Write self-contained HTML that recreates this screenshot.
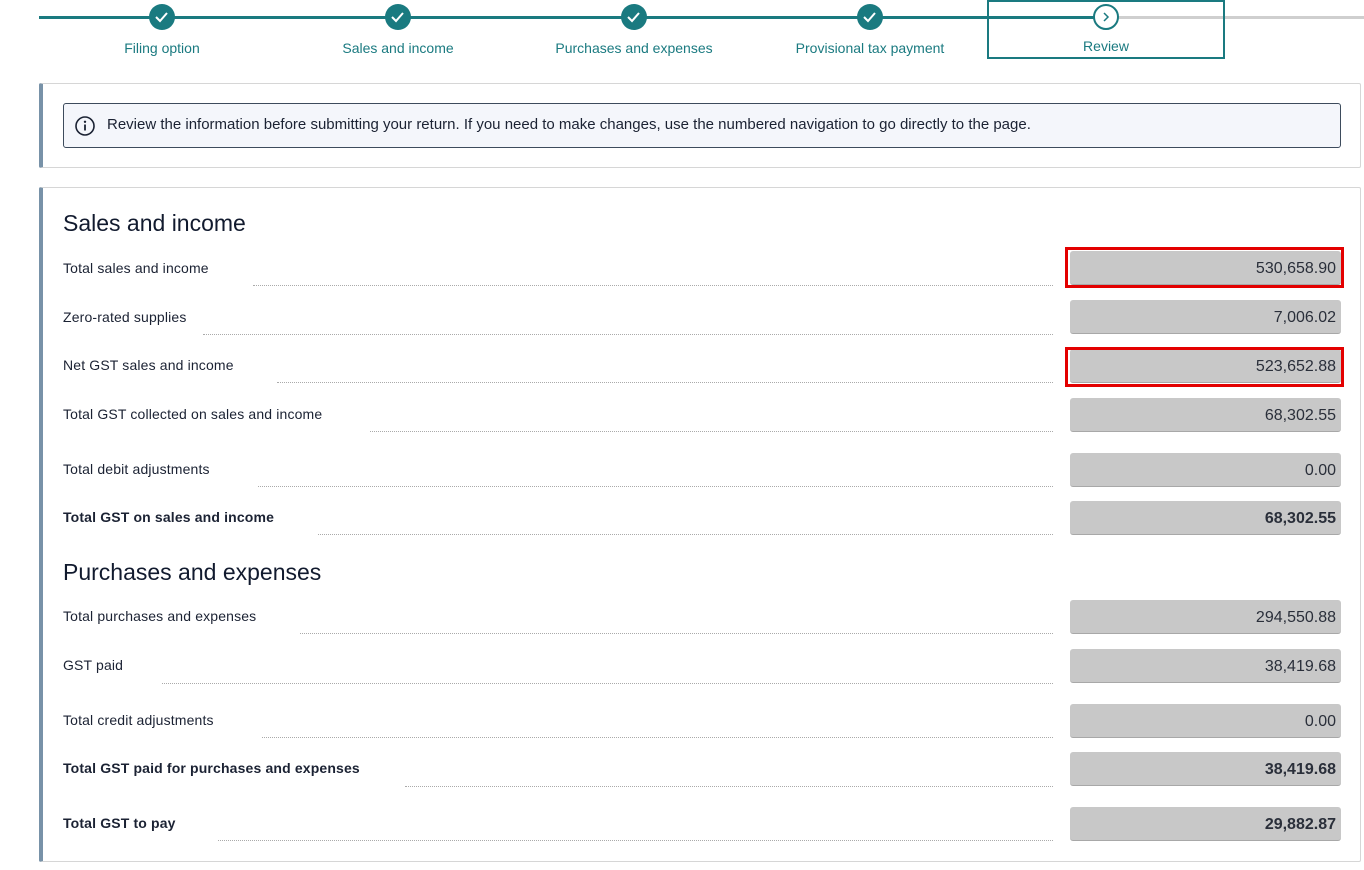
<!DOCTYPE html>
<html><head><style>
*{margin:0;padding:0;box-sizing:border-box}
body{width:1364px;height:870px;background:#fff;position:relative;overflow:hidden;font-family:"Liberation Sans",sans-serif;color:#1b2233}
.a{position:absolute}
.lbl{position:absolute;color:#1a7a80;font-size:14px;white-space:nowrap;transform:translateX(-50%)}
.rl{position:absolute;left:63px;font-size:14px;color:#1b2233;white-space:nowrap;letter-spacing:0.15px}
.b{font-weight:bold}
.dot{position:absolute;height:0;border-top:1px dotted #aaa;right:311px}
.f{position:absolute;left:1070px;width:271px;height:34px;background:#c8c8c8;border-radius:3px;border-bottom:1px solid #a8a8a8;text-align:right;padding-right:5px;font-size:16px;line-height:36px;color:#2a2f3a}
.red{position:absolute;left:1065px;width:279px;border:3px solid #e30000}
h2{position:absolute;left:63px;font-size:23px;font-weight:normal;color:#111a2e}
</style></head><body>
<div class="a" style="left:39px;top:16px;width:1087px;height:3px;background:#1a7a80"></div>
<div class="a" style="left:1118px;top:16px;width:246px;height:3px;background:#cfcfcf"></div>
<div class="a" style="left:987px;top:0;width:238px;height:59px;border:2px solid #1a7a80;background:transparent"></div>
<svg class="a" style="left:0;top:0" width="1364" height="40">
<g fill="#1a7a80">
<circle cx="162" cy="17" r="13"/><circle cx="398" cy="17" r="13"/><circle cx="634" cy="17" r="13"/><circle cx="870" cy="17" r="13"/>
</g>
<g stroke="#fff" stroke-width="2" fill="none">
<path d="M156 17l4 4 7-8"/><path d="M392 17l4 4 7-8"/><path d="M628 17l4 4 7-8"/><path d="M864 17l4 4 7-8"/>
</g>
<circle cx="1106" cy="17" r="12" fill="#fff" stroke="#1a7a80" stroke-width="2"/>
<path d="M1104 13l4 4-4 4" stroke="#1a7a80" stroke-width="1.5" fill="none"/>
</svg>
<div class="lbl" style="left:162px;top:40px">Filing option</div>
<div class="lbl" style="left:398px;top:40px">Sales and income</div>
<div class="lbl" style="left:634px;top:40px">Purchases and expenses</div>
<div class="lbl" style="left:870px;top:40px">Provisional tax payment</div>
<div class="lbl" style="left:1106px;top:38px">Review</div>

<div class="a" style="left:39px;top:83px;width:1322px;height:85px;border:1px solid #d6d6d6;border-left:4px solid #7892a8;border-radius:2px"></div>
<div class="a" style="left:63px;top:103px;width:1278px;height:45px;border:1px solid #3d4b5c;border-radius:3px;background:#f4f6fb"></div>
<svg class="a" style="left:74px;top:115px" width="22" height="22"><circle cx="11" cy="11" r="9" fill="none" stroke="#1b2233" stroke-width="1.6"/><circle cx="11" cy="6.8" r="1.2" fill="#1b2233"/><path d="M11 9.5v6" stroke="#1b2233" stroke-width="1.8"/></svg>
<div class="a" style="left:107px;top:116px;font-size:15px;color:#1b2233;white-space:nowrap">Review the information before submitting your return. If you need to make changes, use the numbered navigation to go directly to the page.</div>

<div class="a" style="left:39px;top:187px;width:1322px;height:675px;border:1px solid #d6d6d6;border-left:4px solid #7892a8;border-radius:2px"></div>
<h2 style="top:210px">Sales and income</h2>
<h2 style="top:559px">Purchases and expenses</h2>

<div class="rl" style="top:260px">Total sales and income</div><div class="dot" style="left:253px;top:285px"></div><div class="f" style="top:251px">530,658.90</div><div class="red" style="top:247px;height:41px"></div>
<div class="rl" style="top:309px">Zero-rated supplies</div><div class="dot" style="left:203px;top:334px"></div><div class="f" style="top:300px">7,006.02</div>
<div class="rl" style="top:357px">Net GST sales and income</div><div class="dot" style="left:277px;top:382px"></div><div class="f" style="top:349px">523,652.88</div><div class="red" style="top:347px;height:40px"></div>
<div class="rl" style="top:406px">Total GST collected on sales and income</div><div class="dot" style="left:370px;top:431px"></div><div class="f" style="top:398px">68,302.55</div>
<div class="rl" style="top:461px">Total debit adjustments</div><div class="dot" style="left:258px;top:486px"></div><div class="f" style="top:453px">0.00</div>
<div class="rl b" style="top:509px">Total GST on sales and income</div><div class="dot" style="left:318px;top:534px"></div><div class="f b" style="top:501px">68,302.55</div>

<div class="rl" style="top:608px">Total purchases and expenses</div><div class="dot" style="left:300px;top:633px"></div><div class="f" style="top:600px">294,550.88</div>
<div class="rl" style="top:657px">GST paid</div><div class="dot" style="left:162px;top:683px"></div><div class="f" style="top:649px">38,419.68</div>
<div class="rl" style="top:712px">Total credit adjustments</div><div class="dot" style="left:262px;top:737px"></div><div class="f" style="top:704px">0.00</div>
<div class="rl b" style="top:760px">Total GST paid for purchases and expenses</div><div class="dot" style="left:405px;top:786px"></div><div class="f b" style="top:752px">38,419.68</div>
<div class="rl b" style="top:815px">Total GST to pay</div><div class="dot" style="left:218px;top:840px"></div><div class="f b" style="top:807px">29,882.87</div>
</body></html>
